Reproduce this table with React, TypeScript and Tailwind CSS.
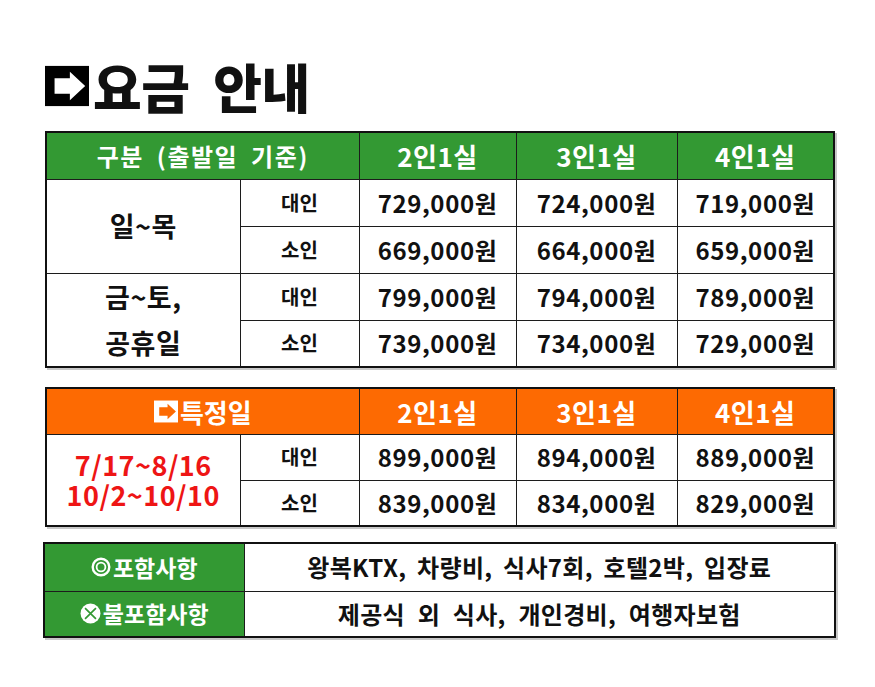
import React from "react";

const FONT = "font-['Noto_Sans_CJK_KR','Noto_Sans',sans-serif]";

const ArrowBox = ({ box, arrow, className }: { box: string; arrow: string; className: string }) => (
  <svg viewBox="0 0 46 42" className={className}>
    <rect x="0" y="0" width="46" height="42" fill={box} />
    <path d="M10 13H26V6L42 21L26 36V29H10Z" fill={arrow} />
  </svg>
);

const cell = "border-[1.5px] border-[#1c1c1c] text-center align-middle p-0";

const weekRows = [
  { group: "일~목", rows: [["대인", "729,000원", "724,000원", "719,000원"], ["소인", "669,000원", "664,000원", "659,000원"]] },
  { group: "금~토,\n공휴일", rows: [["대인", "799,000원", "794,000원", "789,000원"], ["소인", "739,000원", "734,000원", "729,000원"]] },
];

const specialRows = [
  ["대인", "899,000원", "894,000원", "889,000원"],
  ["소인", "839,000원", "834,000원", "829,000원"],
];

const Cols = () => (
  <colgroup>
    <col className="w-[194px]" />
    <col className="w-[119px]" />
    <col className="w-[157px]" />
    <col className="w-[161px]" />
    <col className="w-[157px]" />
  </colgroup>
);

const priceCls = `${cell} text-[24px] font-bold tracking-[0.6px]`;
const headCls = `${cell} text-[26px] tracking-[0.5px]`;

export default function App() {
  return (
    <div className={`w-[875px] h-[687px] bg-white ${FONT} text-[#111] pl-[45px] pt-[65px]`}>
      <div className="flex items-center h-[42px]">
        <ArrowBox box="#000" arrow="#fff" className="w-[44px] h-[42px]" />
        <h1 className="ml-[4px] text-[53px] font-black leading-none [word-spacing:12px] tracking-[-0.5px]">요금 안내</h1>
      </div>

      <table className="mt-[24px] table-fixed border-collapse border-2 border-[#111] w-[788px] shadow-[2px_2px_0_#c8c8c8]">
        <Cols />
        <thead>
          <tr className="h-[47px] bg-[#339933] text-white font-bold">
            <th colSpan={2} className={`${cell} text-[24px] tracking-[1.5px] [word-spacing:6px]`}>구분 (출발일 기준)</th>
            <th className={headCls}>2인1실</th>
            <th className={headCls}>3인1실</th>
            <th className={headCls}>4인1실</th>
          </tr>
        </thead>
        <tbody>
          {weekRows.map((g) =>
            g.rows.map((r, i) => (
              <tr key={g.group + i} className="h-[47px]">
                {i === 0 && (
                  <td rowSpan={2} className={`${cell} text-[27px] font-bold leading-[46px] whitespace-pre-line tracking-[0.5px]`}>
                    {g.group}
                  </td>
                )}
                <td className={`${cell} text-[20px] font-bold`}>{r[0]}</td>
                {r.slice(1).map((p) => (
                  <td key={p} className={priceCls}>{p}</td>
                ))}
              </tr>
            ))
          )}
        </tbody>
      </table>

      <table className="mt-[19px] table-fixed border-collapse border-2 border-[#111] w-[788px] shadow-[2px_2px_0_#c8c8c8]">
        <Cols />
        <thead>
          <tr className="h-[46px] bg-[#fd6a02] text-white font-bold">
            <th colSpan={2} className={`${cell} text-[26px]`}>
              <span className="inline-flex items-center">
                <ArrowBox box="#fff" arrow="#fd6a02" className="w-[24px] h-[23px] mr-[2px]" />
                특정일
              </span>
            </th>
            <th className={headCls}>2인1실</th>
            <th className={headCls}>3인1실</th>
            <th className={headCls}>4인1실</th>
          </tr>
        </thead>
        <tbody>
          {specialRows.map((r, i) => (
            <tr key={i} className="h-[46px]">
              {i === 0 && (
                <td rowSpan={2} className={`${cell} text-[27px] font-bold text-[#ee1515] tracking-[0.5px]`}>
                  <div className="flex flex-col items-center leading-[30px]">
                    <span>7/17~8/16</span>
                    <span>10/2~10/10</span>
                  </div>
                </td>
              )}
              <td className={`${cell} text-[20px] font-bold`}>{r[0]}</td>
              {r.slice(1).map((p) => (
                <td key={p} className={priceCls}>{p}</td>
              ))}
            </tr>
          ))}
        </tbody>
      </table>

      <table className="mt-[15px] -ml-[2px] table-fixed border-collapse border-2 border-[#111] w-[791px] shadow-[2px_2px_0_#c8c8c8]">
        <colgroup>
          <col className="w-[200px]" />
          <col className="w-[591px]" />
        </colgroup>
        <tbody>
          <tr className="h-[48px]">
            <td className={`${cell} bg-[#339933] text-white text-[23px] font-bold`}>
              <span className="inline-flex items-center">
                <svg viewBox="0 0 20 20" className="w-[20px] h-[20px] mr-[2px]">
                  <circle cx="10" cy="10" r="8.3" fill="none" stroke="#fff" strokeWidth="2.4" />
                  <circle cx="10" cy="10" r="4.4" fill="none" stroke="#fff" strokeWidth="1.8" />
                </svg>
                포함사항
              </span>
            </td>
            <td className={`${cell} text-[24px] font-bold tracking-[0.3px] [word-spacing:5px]`}>왕복KTX, 차량비, 식사7회, 호텔2박, 입장료</td>
          </tr>
          <tr className="h-[46px]">
            <td className={`${cell} bg-[#339933] text-white text-[23px] font-bold`}>
              <span className="inline-flex items-center">
                <svg viewBox="0 0 20 20" className="w-[21px] h-[21px] mr-[2px]">
                  <circle cx="10" cy="10" r="9.5" fill="#fff" />
                  <path d="M4.8 4.8L15.2 15.2M15.2 4.8L4.8 15.2" stroke="#339933" strokeWidth="1.6" />
                </svg>
                불포함사항
              </span>
            </td>
            <td className={`${cell} text-[24px] font-bold tracking-[0.3px] [word-spacing:7px]`}>제공식 외 식사, 개인경비, 여행자보험</td>
          </tr>
        </tbody>
      </table>
    </div>
  );
}
